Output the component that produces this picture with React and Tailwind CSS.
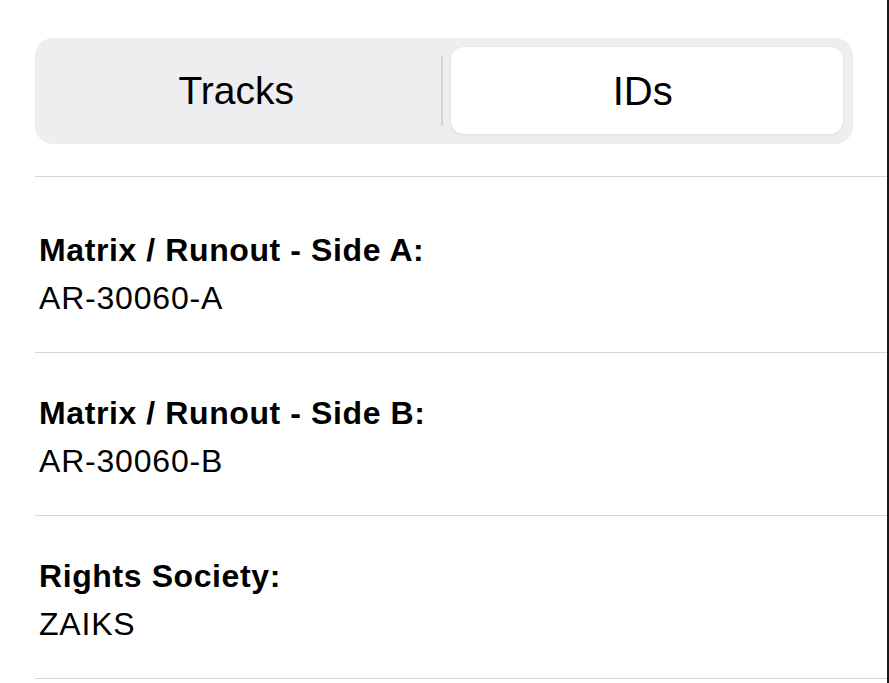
import React from 'react';

const rows = [
  { label: 'Matrix / Runout - Side A:', value: 'AR-30060-A', first: true },
  { label: 'Matrix / Runout - Side B:', value: 'AR-30060-B' },
  { label: 'Rights Society:', value: 'ZAIKS' },
];

export default function App() {
  return (
    <div className="w-[889px] h-[683px] overflow-hidden bg-white text-black flex" style={{ fontFamily: '"Liberation Sans", Arial, sans-serif' }}>
      <div className="flex-1 flex flex-col">
        {/* Segmented control */}
        <div className="ml-[35px] pt-[38px] pb-[32px] border-b border-[#d6d6d8]">
          <div className="w-[818px] h-[106px] rounded-[18px] bg-[#eeeef0] flex items-stretch p-[9px] pr-[10px] pb-[10px]">
            <div className="flex-1 pr-[12px] flex items-center justify-center text-[39px] leading-none">Tracks</div>
            <div className="w-[2px] my-[8px] bg-[#d4d4d8] rounded-full" />
            <div className="flex-1 ml-[8px] pr-[8px] flex items-center justify-center rounded-[13px] bg-white shadow-[0_1px_3px_rgba(0,0,0,0.08)] text-[40px] leading-none">IDs</div>
          </div>
        </div>

        {/* ID rows */}
        <div className="ml-[35px]">
          {rows.map((r) => (
            <div
              key={r.label}
              className={`pl-[4px] border-b border-[#d6d6d8] pb-[30px] ${r.first ? 'pt-[49px]' : 'pt-[36px]'}`}
            >
              <div className="text-[32px] leading-[48px] font-bold tracking-[0.6px]">{r.label}</div>
              <div className="text-[32px] leading-[48px] tracking-[0.8px]">{r.value}</div>
            </div>
          ))}
        </div>
      </div>
      <div className="w-[2px] bg-[#1a1a1a]" />
    </div>
  );
}
